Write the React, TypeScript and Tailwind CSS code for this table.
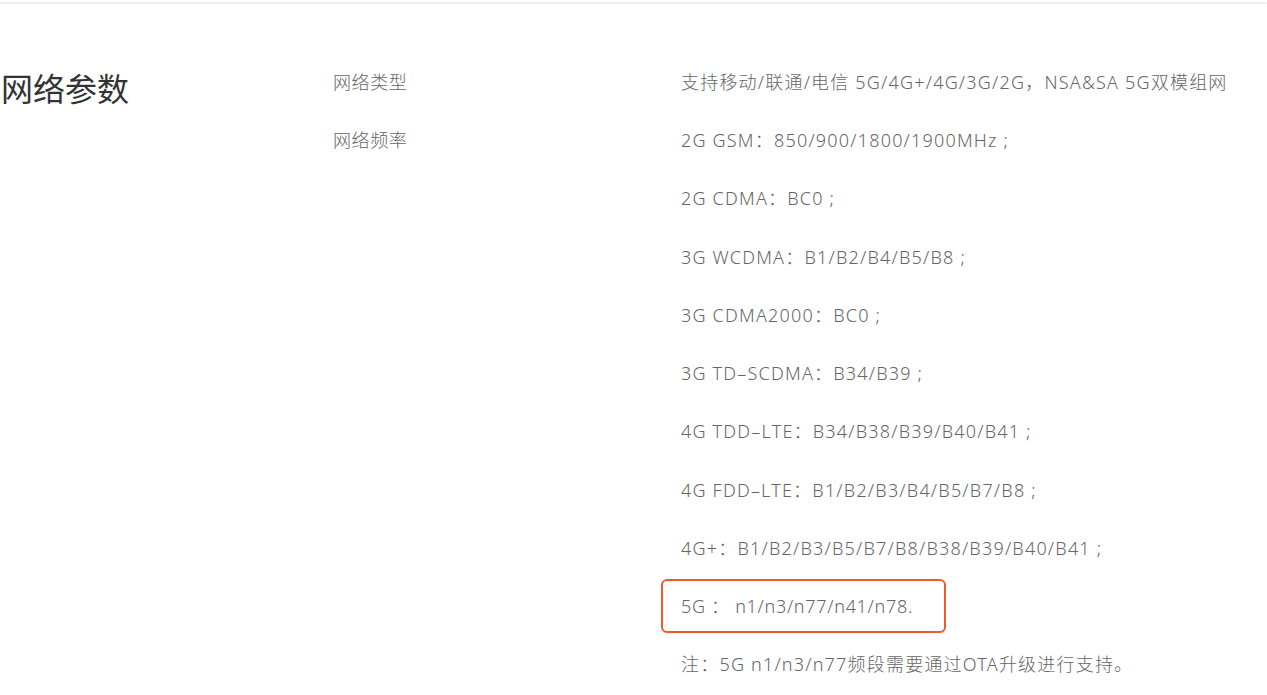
export default function App() {
  const rows = [
    "2G GSM：850/900/1800/1900MHz ;",
    "2G CDMA：BC0 ;",
    "3G WCDMA：B1/B2/B4/B5/B8 ;",
    "3G CDMA2000：BC0 ;",
    "3G TD–SCDMA：B34/B39 ;",
    "4G TDD–LTE：B34/B38/B39/B40/B41 ;",
    "4G FDD–LTE：B1/B2/B3/B4/B5/B7/B8 ;",
    "4G+：B1/B2/B3/B5/B7/B8/B38/B39/B40/B41 ;",
  ];

  return (
    <div className="w-[1267px] h-[695px] bg-white overflow-hidden font-['Noto_Sans','Noto_Sans_CJK_SC',sans-serif]">
      <div className="h-[2px] mt-[2px] w-[1266px] bg-[#ededed]" />

      <div className="flex pt-[49px]">
        {/* heading */}
        <div className="w-[333px] shrink-0 pl-[1px]">
          <h2 className="text-[32px] leading-[72px] text-[#333]">网络参数</h2>
        </div>

        {/* labels */}
        <div className="w-[348px] shrink-0 text-[18px] text-[#666] font-light tracking-[0.6px]">
          <div className="leading-[58px]">网络类型</div>
          <div className="leading-[58px]">网络频率</div>
        </div>

        {/* values */}
        <div className="flex-1 text-[18px] text-[#666] font-light tracking-[1.2px]">
          <div className="leading-[58px] whitespace-nowrap">支持移动/联通/电信 5G/4G+/4G/3G/2G，NSA&amp;SA 5G双模组网</div>
          {rows.map((r, i) => (
            <div key={i} className="leading-[58.3px] whitespace-nowrap">{r}</div>
          ))}
          <div className="-ml-[20px] w-[285px] h-[54px] border-[2.5px] border-[#ef5a2e] rounded-[6px] pl-[18px] flex items-center mt-[2px] whitespace-nowrap tracking-[0.7px]">
            5G ： n1/n3/n77/n41/n78.
          </div>
          <div className="leading-[58px] mt-[2px] whitespace-nowrap">注：5G n1/n3/n77频段需要通过OTA升级进行支持。</div>
        </div>
      </div>
    </div>
  );
}
